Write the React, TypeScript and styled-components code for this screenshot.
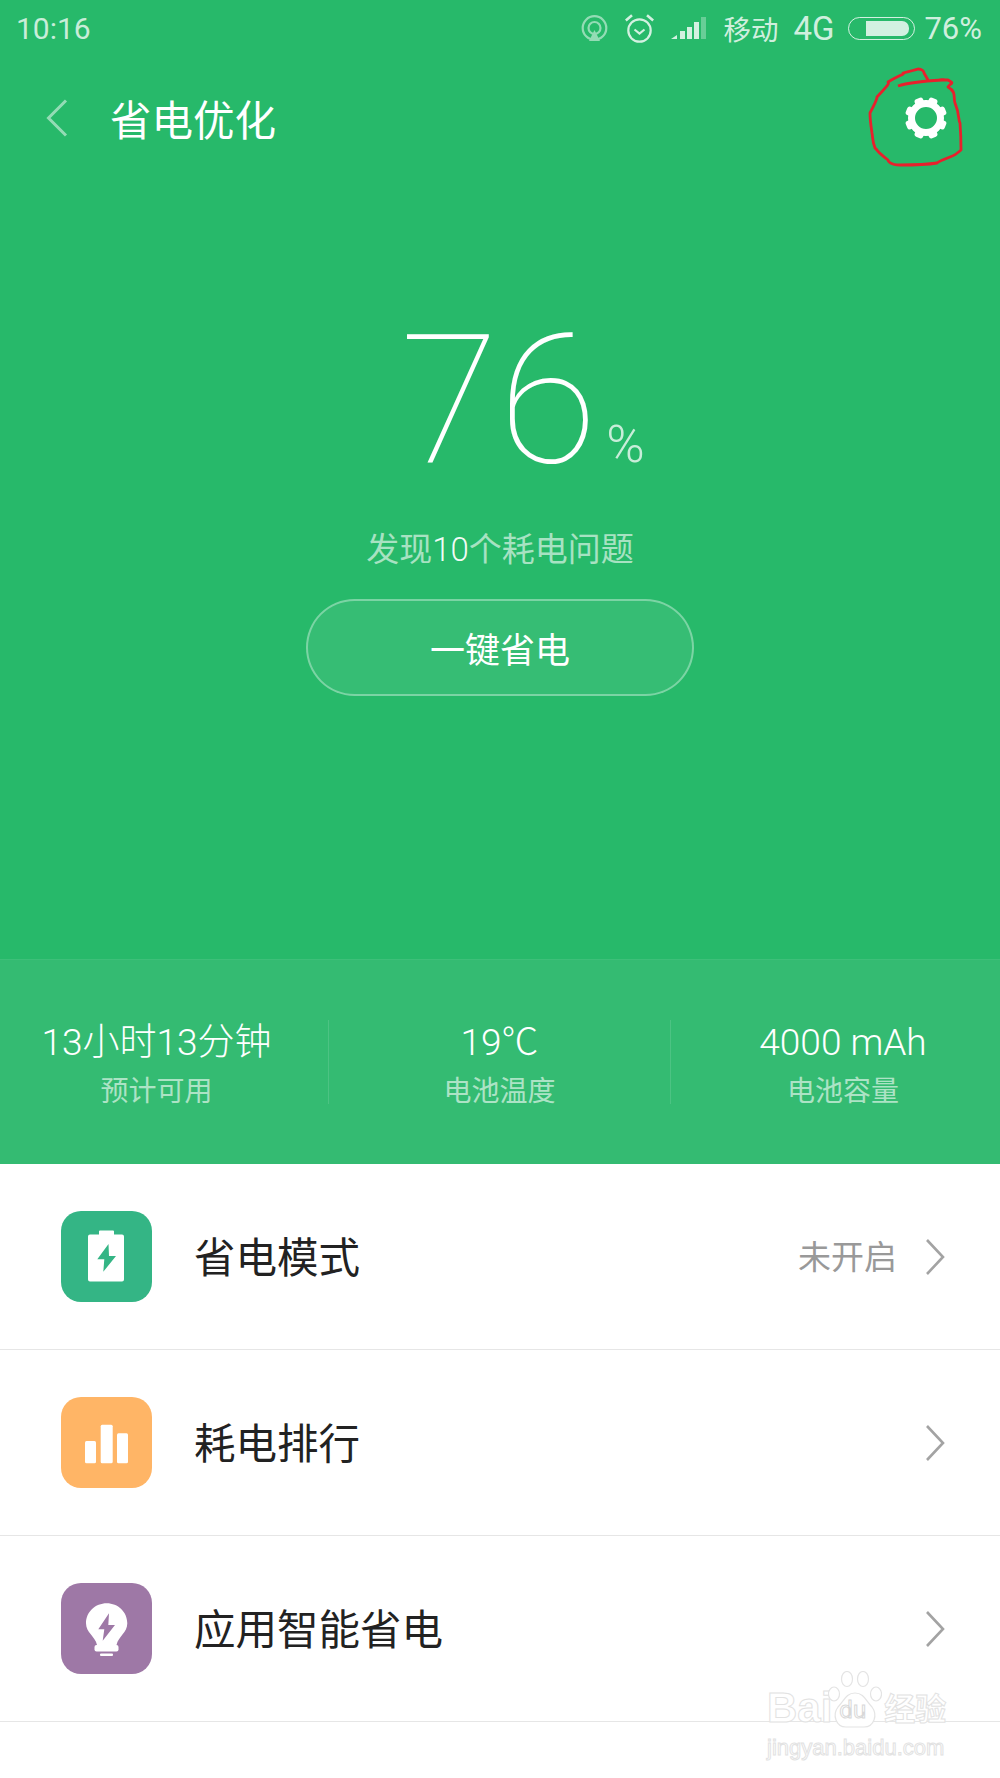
import styled, { createGlobalStyle } from "styled-components"

const GlobalStyle = createGlobalStyle`
    html, body {
        margin: 0;
        padding: 0;
        background: #fff;
    }
    * {
        box-sizing: border-box;
    }
`

const stats = [
    { value: "13小时13分钟", label: "预计可用" },
    { value: "19℃", label: "电池温度" },
    { value: "4000 mAh", label: "电池容量" },
]

const scribble = "M898 86 C910 82 925 81 942 80 C948 79 935 80 941 80 C950 80 945 80 948 80 C955 84 951 82 948 87 C957 92 953 98 955 103 C960 115 958 120 960 123 C961 135 961 145 961 150 C955 155 955 155 950 157 C942 160 938 162 937 163 C925 165 920 165 900 165 C890 165 888 161 888 160 C875 150 878 150 875 148 C872 140 873 138 872 133 C870 120 870 118 870 113 C875 103 877 100 877 97 C885 88 890 84 888 82 C900 75 905 74 903 73 C915 70 918 69 918 69 C922 69 924 71 924 73 L928 80"

function Gear() {
    return (
        <svg width="42" height="42" viewBox="0 0 42 42">
            <circle cx="21" cy="21" r="14.5" fill="none" stroke="#fff" strokeWidth="7" />
            {[22.5, 67.5, 112.5, 157.5, 202.5, 247.5, 292.5, 337.5].map(angle => (
                <rect key={angle} x="16.5" y="0" width="9" height="8" rx="2.5" fill="#fff" transform={`rotate(${angle} 21 21)`} />
            ))}
        </svg>
    )
}

function Chevron() {
    return (
        <svg width="20" height="38" viewBox="0 0 20 38">
            <path d="M2 2 L18 19 L2 36" fill="none" stroke="#a3a3a3" strokeWidth="2.6" />
        </svg>
    )
}

function BatteryIcon() {
    return (
        <svg width="91" height="91" viewBox="0 0 91 91">
            <path d="M39 19.5 h13 a1 1 0 0 1 1 1 v3 h8 a2 2 0 0 1 2 2 v43 a2 2 0 0 1 -2 2 h-32 a2 2 0 0 1 -2 -2 v-43 a2 2 0 0 1 2 -2 h9 v-3 a1 1 0 0 1 1 -1z" fill="#fff" />
            <path d="M47.5 33 L36.3 48.3 H43.3 L42.3 60.7 L55 45 H48z" fill="#34b585" />
        </svg>
    )
}

function BarsIcon() {
    return (
        <svg width="91" height="91" viewBox="0 0 91 91" fill="#fff">
            <rect x="24" y="44" width="11" height="22.3" rx="1.5" />
            <rect x="39.7" y="27.7" width="12" height="38.6" rx="1.5" />
            <rect x="56" y="36.3" width="11" height="30" rx="1.5" />
        </svg>
    )
}

function BulbIcon() {
    return (
        <svg width="91" height="91" viewBox="0 0 91 91" fill="#fff">
            <path d="M45.7 20.3 C57 20.3 66.3 29 66.3 40.3 C66.3 50 57.5 53 55.5 62 H36 C34 53 25 50 25 40.3 C25 29 34.4 20.3 45.7 20.3z" />
            <rect x="33.5" y="62" width="24" height="6.5" rx="2" />
            <rect x="39" y="70.5" width="13" height="2.4" rx="1" />
            <path d="M48 30.3 L37.3 46.3 H43.3 L41.7 57.7 L54 42 H47.3z" fill="#9e78a6" />
        </svg>
    )
}

export default function App() {
    return (
        <Page>
            <GlobalStyle />
            <Top>
                <StatusBar>
                    <Clock>10:16</Clock>
                    <StatusRight>
                        <svg width="27" height="27" viewBox="0 0 27 27" fill="none" opacity="0.5">
                            <circle cx="13.5" cy="13" r="11.8" stroke="#fff" strokeWidth="2.2" />
                            <circle cx="13.5" cy="13" r="6" stroke="#fff" strokeWidth="2.2" />
                            <path d="M13.5 15 L19 26 H8z" fill="#fff" />
                        </svg>
                        <AlarmSlot>
                            <svg width="29" height="29" viewBox="0 0 29 29" fill="none" stroke="#fff" strokeWidth="2.2" opacity="0.8">
                                <circle cx="14.5" cy="16.5" r="11.2" />
                                <path d="M9.5 15.5 L14.5 19.5 L19.5 15.5" />
                                <path d="M0.8 6.5 L7 1.2 M28.2 6.5 L22 1.2" strokeWidth="2.6" />
                            </svg>
                        </AlarmSlot>
                        <SignalSlot>
                            <svg width="35" height="24" viewBox="0 0 35 24" fill="#fff">
                                <path d="M0 23 L6 19 V23z" opacity="0.8" />
                                <rect x="9" y="15" width="5" height="8" opacity="0.8" />
                                <rect x="16" y="11" width="5" height="12" opacity="0.8" />
                                <rect x="23" y="6" width="5" height="17" opacity="0.8" />
                                <rect x="30" y="1" width="5" height="22" opacity="0.3" />
                            </svg>
                        </SignalSlot>
                        <CarrierName>移动</CarrierName>
                        <NetworkType>4G</NetworkType>
                        <Battery>
                            <BatteryFill />
                        </Battery>
                        <BatteryLevel>76%</BatteryLevel>
                    </StatusRight>
                </StatusBar>
                <NavBar>
                    <NavLeft>
                        <svg width="22" height="38" viewBox="0 0 22 38" fill="none" stroke="#fff" strokeWidth="3" opacity="0.5">
                            <path d="M20 1.5 L2.5 19 L20 36.5" />
                        </svg>
                        <Title>省电优化</Title>
                    </NavLeft>
                    <GearSlot>
                        <Gear />
                    </GearSlot>
                    <Scribble width="1000" height="200" viewBox="0 0 1000 200">
                        <path d={scribble} fill="none" stroke="#e8202c" strokeWidth="2.8" strokeLinejoin="round" />
                    </Scribble>
                </NavBar>
                <Hero>
                    <Level>
                        <LevelValue>76</LevelValue>
                        <LevelUnit>%</LevelUnit>
                    </Level>
                    <Problem>发现<b>10</b>个耗电问题</Problem>
                    <SaveButton>一键省电</SaveButton>
                </Hero>
                <StatsBand>
                    {stats.map(stat => (
                        <StatCell key={stat.label}>
                            <StatValue>{stat.value}</StatValue>
                            <StatLabel>{stat.label}</StatLabel>
                        </StatCell>
                    ))}
                </StatsBand>
            </Top>
            <List>
                <Row>
                    <IconBox $color="#34b585"><BatteryIcon /></IconBox>
                    <RowTitle>省电模式</RowTitle>
                    <RowState>未开启</RowState>
                    <Chevron />
                </Row>
                <Row>
                    <IconBox $color="#ffb566"><BarsIcon /></IconBox>
                    <RowTitle>耗电排行</RowTitle>
                    <Chevron />
                </Row>
                <Row>
                    <IconBox $color="#9e78a6"><BulbIcon /></IconBox>
                    <RowTitle>应用智能省电</RowTitle>
                    <Chevron />
                </Row>
            </List>
            <Watermark>
                <MarkTop>
                    <MarkLatin>Bai</MarkLatin>
                    <Paw>
                        <svg width="54" height="58" viewBox="0 0 54 58" fill="#fff" stroke="#e4e4e4" strokeWidth="1.2">
                            <ellipse cx="6" cy="23" rx="5.5" ry="7" />
                            <ellipse cx="19" cy="8" rx="5.5" ry="7.5" />
                            <ellipse cx="35" cy="8" rx="5.5" ry="7.5" />
                            <ellipse cx="48" cy="23" rx="5.5" ry="7" />
                            <path d="M27 22 C36 22 38 30 44 36 C50 44 46 56 36 56 H18 C8 56 4 44 10 36 C16 30 18 22 27 22z" />
                        </svg>
                        <PawText>du</PawText>
                    </Paw>
                    <MarkCjk>经验</MarkCjk>
                </MarkTop>
                <MarkUrl>jingyan.baidu.com</MarkUrl>
            </Watermark>
        </Page>
    )
}

const Page = styled.div`
    position: relative;
    width: 1000px;
    height: 1778px;
    overflow: hidden;
    background: #fff;
    font-family: Roboto, "Noto Sans CJK SC", sans-serif;
`
const Top = styled.div`
    background: #27b96a;
    color: #fff;
`
const StatusBar = styled.div`
    height: 52px;
    padding: 4px 18px 0 16px;
    display: flex;
    align-items: center;
    justify-content: space-between;
`
const Clock = styled.span`
    font-size: 30px;
    color: rgba(255, 255, 255, 0.75);
`
const StatusRight = styled.div`
    display: flex;
    align-items: center;
    color: rgba(255, 255, 255, 0.8);
`
const AlarmSlot = styled.span`
    display: flex;
    margin-left: 17px;
`
const SignalSlot = styled.span`
    display: flex;
    margin: 0 17px 0 17px;
`
const CarrierName = styled.span`
    font-size: 27.5px;
    margin-right: 15px;
`
const NetworkType = styled.span`
    font-size: 33px;
    margin-right: 14px;
`
const BatteryLevel = styled.span`
    font-size: 31px;
    margin-left: 9px;
`
const Battery = styled.span`
    width: 67px;
    height: 23px;
    border: 1.5px solid rgba(255, 255, 255, 0.8);
    border-radius: 12px;
    padding: 3px 5px 3px 17px;
    display: flex;
`
const BatteryFill = styled.span`
    flex: 1;
    background: rgba(255, 255, 255, 0.8);
    border-radius: 0 7px 7px 0;
`
const NavBar = styled.div`
    position: relative;
    height: 134px;
    padding: 0 53px 3px 46px;
    display: flex;
    align-items: center;
    justify-content: space-between;
`
const NavLeft = styled.div`
    display: flex;
    align-items: center;
    gap: 42px;
`
const Title = styled.span`
    font-size: 41.5px;
`
const GearSlot = styled.span`
    display: flex;
`
const Scribble = styled.svg`
    position: absolute;
    left: 0;
    top: -52px;
    pointer-events: none;
`
const Hero = styled.div`
    height: 773px;
    padding-top: 107px;
    display: flex;
    flex-direction: column;
    align-items: center;
`
const Level = styled.div`
    display: flex;
    align-items: baseline;
    height: 216px;
    padding-left: 45px;
`
const LevelValue = styled.span`
    font-size: 180px;
    line-height: 216px;
    font-weight: 100;
`
const LevelUnit = styled.span`
    font-size: 52px;
    font-weight: 300;
    margin-left: 9px;
    color: rgba(255, 255, 255, 0.75);
`
const Problem = styled.div`
    margin-top: 17px;
    font-size: 33px;
    line-height: 48px;
    color: rgba(255, 255, 255, 0.6);
    b {
        font-weight: 300;
        color: rgba(255, 255, 255, 0.95);
    }
`
const SaveButton = styled.div`
    margin-top: 25px;
    width: 388px;
    height: 97px;
    border-radius: 49px;
    border: 2px solid rgba(255, 255, 255, 0.35);
    background: rgba(255, 255, 255, 0.07);
    display: flex;
    align-items: center;
    justify-content: center;
    font-size: 35px;
`
const StatsBand = styled.div`
    height: 205px;
    background: #34bb72;
    border-top: 1px solid #3dbf79;
    display: grid;
    grid-template-columns: 329px 342px 329px;
    align-items: center;
`
const StatCell = styled.div`
    height: 84px;
    padding-top: 8px;
    display: flex;
    flex-direction: column;
    align-items: center;
    justify-content: center;
    border-right: 1px solid rgba(255, 255, 255, 0.12);
    &:first-child {
        padding-right: 15px;
    }
    &:last-child {
        padding-left: 15px;
        border-right: none;
    }
`
const StatValue = styled.div`
    font-size: 37px;
    line-height: 46px;
    font-weight: 300;
`
const StatLabel = styled.div`
    margin-top: 5px;
    font-size: 28px;
    line-height: 42px;
    color: rgba(255, 255, 255, 0.6);
`
const List = styled.div`
    display: flex;
    flex-direction: column;
`
const Row = styled.div`
    height: 186px;
    padding: 0 55px 0 61px;
    border-bottom: 1px solid #e6e6e6;
    display: flex;
    align-items: center;
`
const IconBox = styled.div<{ $color: string }>`
    width: 91px;
    height: 91px;
    border-radius: 20px;
    background: ${props => props.$color};
    display: flex;
`
const RowTitle = styled.div`
    flex: 1;
    margin-left: 42px;
    padding-bottom: 4px;
    font-size: 41.5px;
    color: #222;
`
const RowState = styled.div`
    margin-right: 28px;
    padding-bottom: 4px;
    font-size: 33px;
    color: #999;
`
const Watermark = styled.div`
    position: absolute;
    left: 767px;
    top: 1671px;
    width: 190px;
`
const MarkTop = styled.div`
    display: flex;
    align-items: flex-end;
    height: 58px;
`
const MarkLatin = styled.span`
    font-family: "Liberation Sans", sans-serif;
    font-weight: 700;
    font-size: 42px;
    line-height: 42px;
    color: #fff;
    -webkit-text-stroke: 1px #e2e2e2;
`
const Paw = styled.span`
    position: relative;
    display: flex;
    margin-left: -4px;
`
const PawText = styled.span`
    position: absolute;
    left: 11px;
    bottom: 6px;
    font-size: 24px;
    line-height: 26px;
    color: #fff;
    -webkit-text-stroke: 1px #d8d8d8;
`
const MarkCjk = styled.span`
    margin-left: 2px;
    font-size: 31px;
    line-height: 38px;
    font-weight: 700;
    color: #fff;
    -webkit-text-stroke: 1px #e2e2e2;
`
const MarkUrl = styled.div`
    margin-top: 6px;
    font-family: "Liberation Sans", sans-serif;
    font-size: 22px;
    line-height: 26px;
    color: #fff;
    -webkit-text-stroke: 1px #e2e2e2;
`
